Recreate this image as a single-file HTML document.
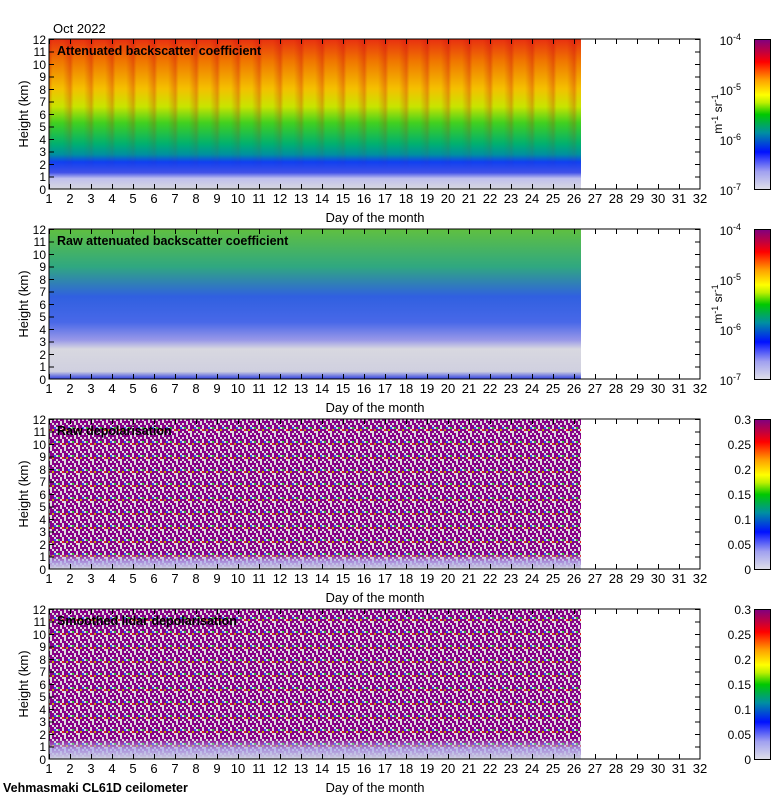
<!DOCTYPE html>
<html><head><meta charset="utf-8"><style>
html,body{margin:0;padding:0;background:#fff}
svg{display:block}
text{font-family:"Liberation Sans",sans-serif;font-size:13px;fill:#000}
.y{font-size:12px}
.b{font-weight:bold;font-size:12.5px}
.r{text-anchor:end}
.c{text-anchor:middle}
</style></head><body>
<svg width="780" height="800" viewBox="0 0 780 800" xmlns="http://www.w3.org/2000/svg">
<defs>
<linearGradient id="g1" x1="0" y1="0" x2="0" y2="1">
<stop offset="0" stop-color="#e83010"/><stop offset="0.15" stop-color="#f07800"/><stop offset="0.33" stop-color="#f4c000"/><stop offset="0.45" stop-color="#c8e400"/><stop offset="0.56" stop-color="#40d020"/><stop offset="0.7" stop-color="#00b070"/><stop offset="0.77" stop-color="#0090a0"/><stop offset="0.82" stop-color="#1040f0"/><stop offset="0.89" stop-color="#4050e8"/><stop offset="0.93" stop-color="#c0c0ee"/><stop offset="1" stop-color="#d8d8e0"/>
</linearGradient>
<linearGradient id="st" x1="0" y1="0" x2="21" y2="0" gradientUnits="userSpaceOnUse" spreadMethod="repeat">
<stop offset="0" stop-color="#d01010" stop-opacity="0"/><stop offset="0.35" stop-color="#d01010" stop-opacity="0.4"/><stop offset="0.5" stop-color="#d01010" stop-opacity="0"/><stop offset="1" stop-color="#d01010" stop-opacity="0"/>
</linearGradient>
<linearGradient id="fm" x1="0" y1="0" x2="0" y2="1">
<stop offset="0" stop-color="#fff"/><stop offset="0.5" stop-color="#fff" stop-opacity="0.7"/><stop offset="1" stop-color="#fff" stop-opacity="0"/>
</linearGradient>
<mask id="m1"><rect x="49" y="0" width="532" height="130" fill="url(#fm)"/></mask>
<linearGradient id="g2" x1="0" y1="0" x2="0" y2="1">
<stop offset="0" stop-color="#60c040"/><stop offset="0.25" stop-color="#30a880"/><stop offset="0.45" stop-color="#3060e0"/><stop offset="0.62" stop-color="#4868e8"/><stop offset="0.74" stop-color="#9898e8"/><stop offset="0.8" stop-color="#d8d8e0"/><stop offset="0.95" stop-color="#d0d0e0"/><stop offset="1" stop-color="#3040e0"/>
</linearGradient>
<linearGradient id="g3b" x1="0" y1="0" x2="0" y2="1">
<stop offset="0" stop-color="#c8c8e8" stop-opacity="0"/><stop offset="0.5" stop-color="#b0b0ee" stop-opacity="0.8"/><stop offset="1" stop-color="#d0d0e0"/>
</linearGradient>
<linearGradient id="cb1" x1="0" y1="1" x2="0" y2="0">
<stop offset="0" stop-color="#e0e0e8"/><stop offset="0.12" stop-color="#a0a0f0"/><stop offset="0.25" stop-color="#0010ff"/><stop offset="0.38" stop-color="#0090a0"/><stop offset="0.5" stop-color="#00c800"/><stop offset="0.58" stop-color="#c0f000"/><stop offset="0.63" stop-color="#ffff00"/><stop offset="0.73" stop-color="#ffa000"/><stop offset="0.85" stop-color="#ff0000"/><stop offset="0.92" stop-color="#c00040"/><stop offset="1" stop-color="#800080"/>
</linearGradient>
<pattern id="pn" width="14" height="14" patternUnits="userSpaceOnUse">
<rect width="14" height="14" fill="#dcdcdc"/>
<path d="M0 0h2v2h2v2h-4zM4 0h4v2h-4zM10 0h2v4h-2zM6 2h2v2h2v2h-4zM2 4h2v4h-2zM8 4h2v2h-2zM0 6h2v2h-2zM4 6h2v4h-2zM8 6h4v2h-2v2h-2zM0 10h4v2h-4zM8 10h2v2h-2zM10 8h2v2h-2zM12 2h2v4h-2zM12 10h2v4h-2zM2 12h4v2h-4zM10 12h2v2h-2z" fill="#880088"/>
<rect x="6" y="10" width="2" height="2" fill="#e02020"/><rect x="2" y="8" width="2" height="2" fill="#30c030"/><rect x="10" y="10" width="2" height="2" fill="#c0b000"/><rect x="12" y="8" width="2" height="2" fill="#3050f0"/>
</pattern>
<pattern id="xt" width="21" height="5" patternUnits="userSpaceOnUse" x="49"><rect width="1" height="5" fill="#000"/></pattern>
<pattern id="yt1" width="5" height="12.5" patternUnits="userSpaceOnUse" y="39"><rect width="5" height="1" fill="#000"/></pattern>
<pattern id="yt2" width="5" height="12.5" patternUnits="userSpaceOnUse" y="229"><rect width="5" height="1" fill="#000"/></pattern>
<pattern id="yt3" width="5" height="12.5" patternUnits="userSpaceOnUse" y="419"><rect width="5" height="1" fill="#000"/></pattern>
<pattern id="yt4" width="5" height="12.5" patternUnits="userSpaceOnUse" y="609"><rect width="5" height="1" fill="#000"/></pattern>
</defs>

<text x="53" y="33">Oct 2022</text>

<g transform="translate(0,39)">
<rect x="49" y="0" width="532" height="150" fill="url(#g1)"/>
<rect x="49" y="0" width="532" height="130" fill="url(#st)" mask="url(#m1)"/>
<rect x="49" y="0" width="651" height="150" fill="none" stroke="#000"/>
<text class="b" x="57" y="16">Attenuated backscatter coefficient</text>
</g>
<g transform="translate(0,229)">
<rect x="49" y="0" width="532" height="150" fill="url(#g2)"/>
<rect x="49" y="0" width="651" height="150" fill="none" stroke="#000"/>
<text class="b" x="57" y="16">Raw attenuated backscatter coefficient</text>
</g>
<g transform="translate(0,419)">
<rect x="49" y="0" width="532" height="150" fill="url(#pn)"/>
<rect x="49" y="135" width="532" height="15" fill="url(#g3b)"/>
<rect x="49" y="0" width="651" height="150" fill="none" stroke="#000"/>
<text class="b" x="57" y="16">Raw depolarisation</text>
</g>
<g transform="translate(0,609)">
<rect x="49" y="0" width="532" height="150" fill="url(#pn)"/>
<rect x="49" y="130" width="532" height="20" fill="url(#g3b)"/>
<rect x="49" y="0" width="651" height="150" fill="none" stroke="#000"/>
<text class="b" x="57" y="16">Smoothed lidar depolarisation</text>
</g>

<g>
<rect x="48.5" y="184" width="652" height="5" fill="url(#xt)"/><rect x="48.5" y="39" width="652" height="5" fill="url(#xt)"/>
<rect x="48.5" y="374" width="652" height="5" fill="url(#xt)"/><rect x="48.5" y="229" width="652" height="5" fill="url(#xt)"/>
<rect x="48.5" y="564" width="652" height="5" fill="url(#xt)"/><rect x="48.5" y="419" width="652" height="5" fill="url(#xt)"/>
<rect x="48.5" y="754" width="652" height="5" fill="url(#xt)"/><rect x="48.5" y="609" width="652" height="5" fill="url(#xt)"/>
<rect x="695" y="39" width="5" height="150" fill="url(#yt1)"/><rect x="49" y="39" width="5" height="150" fill="url(#yt1)"/>
<rect x="695" y="229" width="5" height="150" fill="url(#yt2)"/><rect x="49" y="229" width="5" height="150" fill="url(#yt2)"/>
<rect x="695" y="419" width="5" height="150" fill="url(#yt3)"/><rect x="49" y="419" width="5" height="150" fill="url(#yt3)"/>
<rect x="695" y="609" width="5" height="150" fill="url(#yt4)"/><rect x="49" y="609" width="5" height="150" fill="url(#yt4)"/>
</g>

<g>
<text class="r y" x="46" y="44">12</text><text class="r y" x="46" y="56">11</text><text class="r y" x="46" y="69">10</text><text class="r y" x="46" y="81">9</text><text class="r y" x="46" y="94">8</text><text class="r y" x="46" y="106">7</text><text class="r y" x="46" y="119">6</text><text class="r y" x="46" y="131">5</text><text class="r y" x="46" y="144">4</text><text class="r y" x="46" y="156">3</text><text class="r y" x="46" y="169">2</text><text class="r y" x="46" y="181">1</text><text class="r y" x="46" y="194">0</text>
<text class="r y" x="46" y="234">12</text><text class="r y" x="46" y="246">11</text><text class="r y" x="46" y="259">10</text><text class="r y" x="46" y="271">9</text><text class="r y" x="46" y="284">8</text><text class="r y" x="46" y="296">7</text><text class="r y" x="46" y="309">6</text><text class="r y" x="46" y="321">5</text><text class="r y" x="46" y="334">4</text><text class="r y" x="46" y="346">3</text><text class="r y" x="46" y="359">2</text><text class="r y" x="46" y="371">1</text><text class="r y" x="46" y="384">0</text>
<text class="r y" x="46" y="424">12</text><text class="r y" x="46" y="436">11</text><text class="r y" x="46" y="449">10</text><text class="r y" x="46" y="461">9</text><text class="r y" x="46" y="474">8</text><text class="r y" x="46" y="486">7</text><text class="r y" x="46" y="499">6</text><text class="r y" x="46" y="511">5</text><text class="r y" x="46" y="524">4</text><text class="r y" x="46" y="536">3</text><text class="r y" x="46" y="549">2</text><text class="r y" x="46" y="561">1</text><text class="r y" x="46" y="574">0</text>
<text class="r y" x="46" y="614">12</text><text class="r y" x="46" y="626">11</text><text class="r y" x="46" y="639">10</text><text class="r y" x="46" y="651">9</text><text class="r y" x="46" y="664">8</text><text class="r y" x="46" y="676">7</text><text class="r y" x="46" y="689">6</text><text class="r y" x="46" y="701">5</text><text class="r y" x="46" y="714">4</text><text class="r y" x="46" y="726">3</text><text class="r y" x="46" y="739">2</text><text class="r y" x="46" y="751">1</text><text class="r y" x="46" y="764">0</text>
</g>
<text class="c" transform="translate(28,114) rotate(-90)">Height (km)</text>
<text class="c" transform="translate(28,304) rotate(-90)">Height (km)</text>
<text class="c" transform="translate(28,494) rotate(-90)">Height (km)</text>
<text class="c" transform="translate(28,684) rotate(-90)">Height (km)</text>

<g>
<text class="c" x="49" y="203">1</text><text class="c" x="70" y="203">2</text><text class="c" x="91" y="203">3</text><text class="c" x="112" y="203">4</text><text class="c" x="133" y="203">5</text><text class="c" x="154" y="203">6</text><text class="c" x="175" y="203">7</text><text class="c" x="196" y="203">8</text><text class="c" x="217" y="203">9</text><text class="c" x="238" y="203">10</text><text class="c" x="259" y="203">11</text><text class="c" x="280" y="203">12</text><text class="c" x="301" y="203">13</text><text class="c" x="322" y="203">14</text><text class="c" x="343" y="203">15</text><text class="c" x="364" y="203">16</text><text class="c" x="385" y="203">17</text><text class="c" x="406" y="203">18</text><text class="c" x="427" y="203">19</text><text class="c" x="448" y="203">20</text><text class="c" x="469" y="203">21</text><text class="c" x="490" y="203">22</text><text class="c" x="511" y="203">23</text><text class="c" x="532" y="203">24</text><text class="c" x="553" y="203">25</text><text class="c" x="574" y="203">26</text><text class="c" x="595" y="203">27</text><text class="c" x="616" y="203">28</text><text class="c" x="637" y="203">29</text><text class="c" x="658" y="203">30</text><text class="c" x="679" y="203">31</text><text class="c" x="700" y="203">32</text>
</g>
<g>
<text class="c" x="49" y="393">1</text><text class="c" x="70" y="393">2</text><text class="c" x="91" y="393">3</text><text class="c" x="112" y="393">4</text><text class="c" x="133" y="393">5</text><text class="c" x="154" y="393">6</text><text class="c" x="175" y="393">7</text><text class="c" x="196" y="393">8</text><text class="c" x="217" y="393">9</text><text class="c" x="238" y="393">10</text><text class="c" x="259" y="393">11</text><text class="c" x="280" y="393">12</text><text class="c" x="301" y="393">13</text><text class="c" x="322" y="393">14</text><text class="c" x="343" y="393">15</text><text class="c" x="364" y="393">16</text><text class="c" x="385" y="393">17</text><text class="c" x="406" y="393">18</text><text class="c" x="427" y="393">19</text><text class="c" x="448" y="393">20</text><text class="c" x="469" y="393">21</text><text class="c" x="490" y="393">22</text><text class="c" x="511" y="393">23</text><text class="c" x="532" y="393">24</text><text class="c" x="553" y="393">25</text><text class="c" x="574" y="393">26</text><text class="c" x="595" y="393">27</text><text class="c" x="616" y="393">28</text><text class="c" x="637" y="393">29</text><text class="c" x="658" y="393">30</text><text class="c" x="679" y="393">31</text><text class="c" x="700" y="393">32</text>
</g>
<g>
<text class="c" x="49" y="583">1</text><text class="c" x="70" y="583">2</text><text class="c" x="91" y="583">3</text><text class="c" x="112" y="583">4</text><text class="c" x="133" y="583">5</text><text class="c" x="154" y="583">6</text><text class="c" x="175" y="583">7</text><text class="c" x="196" y="583">8</text><text class="c" x="217" y="583">9</text><text class="c" x="238" y="583">10</text><text class="c" x="259" y="583">11</text><text class="c" x="280" y="583">12</text><text class="c" x="301" y="583">13</text><text class="c" x="322" y="583">14</text><text class="c" x="343" y="583">15</text><text class="c" x="364" y="583">16</text><text class="c" x="385" y="583">17</text><text class="c" x="406" y="583">18</text><text class="c" x="427" y="583">19</text><text class="c" x="448" y="583">20</text><text class="c" x="469" y="583">21</text><text class="c" x="490" y="583">22</text><text class="c" x="511" y="583">23</text><text class="c" x="532" y="583">24</text><text class="c" x="553" y="583">25</text><text class="c" x="574" y="583">26</text><text class="c" x="595" y="583">27</text><text class="c" x="616" y="583">28</text><text class="c" x="637" y="583">29</text><text class="c" x="658" y="583">30</text><text class="c" x="679" y="583">31</text><text class="c" x="700" y="583">32</text>
</g>
<g>
<text class="c" x="49" y="773">1</text><text class="c" x="70" y="773">2</text><text class="c" x="91" y="773">3</text><text class="c" x="112" y="773">4</text><text class="c" x="133" y="773">5</text><text class="c" x="154" y="773">6</text><text class="c" x="175" y="773">7</text><text class="c" x="196" y="773">8</text><text class="c" x="217" y="773">9</text><text class="c" x="238" y="773">10</text><text class="c" x="259" y="773">11</text><text class="c" x="280" y="773">12</text><text class="c" x="301" y="773">13</text><text class="c" x="322" y="773">14</text><text class="c" x="343" y="773">15</text><text class="c" x="364" y="773">16</text><text class="c" x="385" y="773">17</text><text class="c" x="406" y="773">18</text><text class="c" x="427" y="773">19</text><text class="c" x="448" y="773">20</text><text class="c" x="469" y="773">21</text><text class="c" x="490" y="773">22</text><text class="c" x="511" y="773">23</text><text class="c" x="532" y="773">24</text><text class="c" x="553" y="773">25</text><text class="c" x="574" y="773">26</text><text class="c" x="595" y="773">27</text><text class="c" x="616" y="773">28</text><text class="c" x="637" y="773">29</text><text class="c" x="658" y="773">30</text><text class="c" x="679" y="773">31</text><text class="c" x="700" y="773">32</text>
</g>
<text class="c" x="375" y="222">Day of the month</text>
<text class="c" x="375" y="412">Day of the month</text>
<text class="c" x="375" y="602">Day of the month</text>
<text class="c" x="375" y="792">Day of the month</text>
<text class="b" x="3" y="792">Vehmasmaki CL61D ceilometer</text>

<rect x="754.5" y="39.5" width="16" height="150" fill="url(#cb1)" stroke="#000"/>
<rect x="754.5" y="229.5" width="16" height="150" fill="url(#cb1)" stroke="#000"/>
<rect x="754.5" y="419.5" width="16" height="150" fill="url(#cb1)" stroke="#000"/>
<rect x="754.5" y="609.5" width="16" height="150" fill="url(#cb1)" stroke="#000"/>
<g>
<text class="r y" x="741" y="45">10<tspan dy="-5" font-size="9">-4</tspan></text>
<text class="r y" x="741" y="95">10<tspan dy="-5" font-size="9">-5</tspan></text>
<text class="r y" x="741" y="145">10<tspan dy="-5" font-size="9">-6</tspan></text>
<text class="r y" x="741" y="195">10<tspan dy="-5" font-size="9">-7</tspan></text>
<text class="r y" x="741" y="235">10<tspan dy="-5" font-size="9">-4</tspan></text>
<text class="r y" x="741" y="285">10<tspan dy="-5" font-size="9">-5</tspan></text>
<text class="r y" x="741" y="335">10<tspan dy="-5" font-size="9">-6</tspan></text>
<text class="r y" x="741" y="385">10<tspan dy="-5" font-size="9">-7</tspan></text>
</g>
<text class="c y" transform="translate(722,114) rotate(-90)">m<tspan dy="-4" font-size="9">-1</tspan><tspan dy="4"> sr</tspan><tspan dy="-4" font-size="9">-1</tspan></text>
<text class="c y" transform="translate(722,304) rotate(-90)">m<tspan dy="-4" font-size="9">-1</tspan><tspan dy="4"> sr</tspan><tspan dy="-4" font-size="9">-1</tspan></text>
<g>
<text class="r y" x="751" y="424">0.3</text><text class="r y" x="751" y="449">0.25</text><text class="r y" x="751" y="474">0.2</text><text class="r y" x="751" y="499">0.15</text><text class="r y" x="751" y="524">0.1</text><text class="r y" x="751" y="549">0.05</text><text class="r y" x="751" y="574">0</text>
<text class="r y" x="751" y="614">0.3</text><text class="r y" x="751" y="639">0.25</text><text class="r y" x="751" y="664">0.2</text><text class="r y" x="751" y="689">0.15</text><text class="r y" x="751" y="714">0.1</text><text class="r y" x="751" y="739">0.05</text><text class="r y" x="751" y="764">0</text>
</g>
</svg>
</body></html>
